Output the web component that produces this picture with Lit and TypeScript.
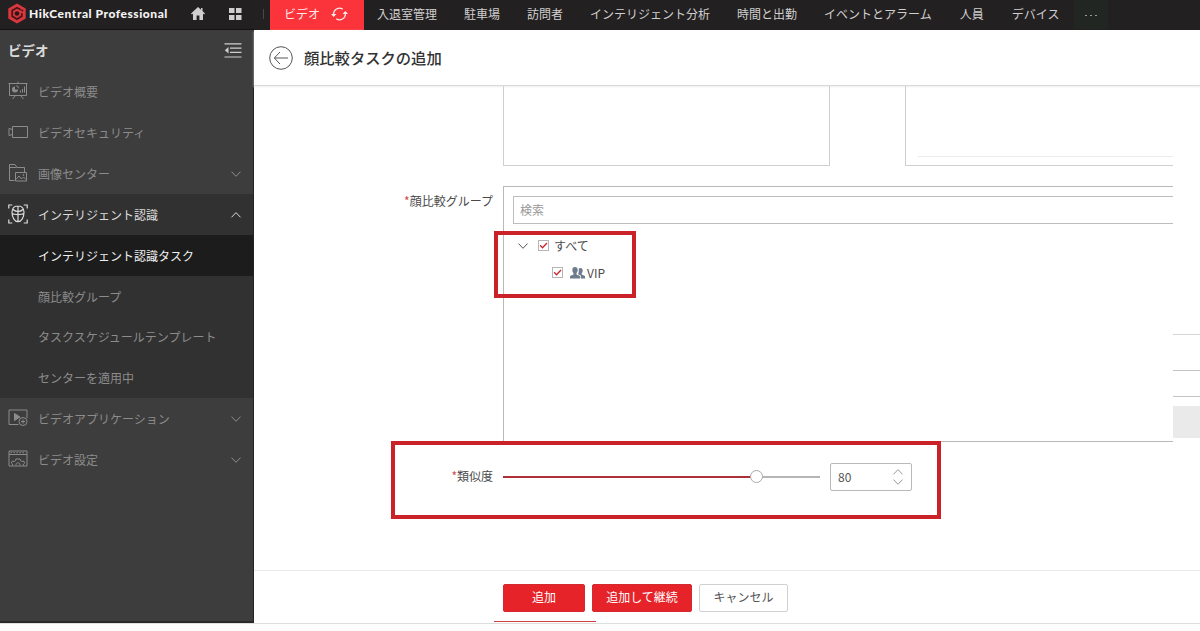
import { LitElement, html, css, svg } from "lit";
import { customElement, property } from "lit/decorators.js";
import { classMap } from "lit/directives/class-map.js";

const chevron = (up: boolean) => html`<svg width="12" height="8" viewBox="0 0 12 8" fill="none" stroke="currentColor" stroke-width="1"><path d=${up ? "M1.5 6.3 6 1.6l4.500 4.700" : "M1.5 1.6 6 6.3l4.500-4.700"} /></svg>`;

const icons: Record<string, unknown> = {
  board: svg`<path d="M.5 2.500h19M1.500 2.500v12h17v-12M10 .500v2M7.500 14.500l-3 3.500M12.500 14.500l3 3.500"/><path d="M7 5.500a3 3 0 1 0 3 3h-3z" fill="currentColor" stroke="none"/><path d="M8.200 4.800a2.800 2.800 0 0 1 2.500 2.500" /><path d="M12.500 11.500v-2M14.500 11.500v-3.500M16.500 11.500v-6"/>`,
  camera: svg`<path d="M4.500 4.500h15v11h-15zM4.500 7.500l-3.500-1v7l3.500-1"/>`,
  image: svg`<path d="M6.500 17.500h-5v-16h5.500l2 3h7.500v5M1.500 4.500h7"/><path d="M7.500 9.500h11v8.500h-11zM8 16.500l3-3.500 2.500 3 2-2 2.500 2.500"/><circle cx="15.500" cy="12" r=".5"/>`,
  face: svg`<g stroke-width="1.200"><path d="M.8 4.500V1h3.500M15.700 1h3.500v3.500M19.200 15.500V19h-3.500M4.300 19H.8v-3.500"/><path d="M10 1.800c-3.800 0-6 2.700-6 6.400 0 5 2.600 9.500 6 9.500s6-4.500 6-9.500c0-3.700-2.200-6.400-6-6.400zM10 1.800v15.900M4 9.500c3 1.400 9 1.400 12 0M5 5.500c1.500 1.500 3.500 2 5 2s3.500-.5 5-2"/></g>`,
  app: svg`<path d="M10.500 16.500h-9.500v-14.500h18v8"/><path d="M6.500 5.500v7l5.500-3.500z" fill="currentColor"/><circle cx="15" cy="13.500" r="4"/><path d="M15 11.500v4M13 13.500h4"/>`,
  gear: svg`<path d="M1 2h18v15H1zM1 5.500h18"/><path d="M2.500 3.700h15" stroke-dasharray="1.500 1.500"/><path d="M4.500 16.500v-1.500l-1.200-1 1.200-2 1.700.5 1.300-.8.4-1.700h4.200l.4 1.700 1.300.8 1.700-.5 1.200 2-1.200 1v1.500"/><path d="M8 16.500v-1c0-2.200 4-2.200 4 0v1"/>`,
};

interface Entry { label: string; icon: string; fold?: "up" | "down"; children?: string[] }

const entries: Entry[] = [
  { label: "ビデオ概要", icon: "board" },
  { label: "ビデオセキュリティ", icon: "camera" },
  { label: "画像センター", icon: "image", fold: "down" },
  { label: "インテリジェント認識", icon: "face", fold: "up", children: ["インテリジェント認識タスク", "顔比較グループ", "タスクスケジュールテンプレート", "センターを適用中"] },
  { label: "ビデオアプリケーション", icon: "app", fold: "down" },
  { label: "ビデオ設定", icon: "gear", fold: "down" },
];

@customElement("top-bar")
class TopBar extends LitElement {
  static styles = css`
    :host { display: flex; height: 30px; box-sizing: border-box; background: #232021; border-bottom: 1px solid #141112; color: #d0cfcf; font-size: 12px; line-height: 27px; white-space: nowrap; }
    svg { display: block; flex: none; }
    .brand { display: flex; align-items: center; width: 270px; box-sizing: border-box; padding-left: 7px; flex: none; height: 27px; }
    .name { width: 140px; margin-left: 2px; font: 900 12px/26px Lato, sans-serif; letter-spacing: .54px; color: #f4f4f4; }
    .home { margin-left: 22px; }
    .home, .grid { color: #d0cfcf; }
    .grid { margin-left: 24px; }
    .sep { width: 1px; height: 10px; background: #494647; margin-left: 21px; }
    .active { display: flex; align-items: center; width: 94px; height: 30px; box-sizing: border-box; padding: 0 0 3px 14px; background: #fb343c; color: #ffe9e9; gap: 11px; }
    nav { display: flex; gap: 27px; padding-left: 13px; }
    nav span:nth-child(n + 7) { margin-left: 1px; }
    .more { width: 34px; height: 29px; margin-left: 15px; background: #222622; display: flex; align-items: center; justify-content: center; gap: 3px; }
    .more i { width: 2px; height: 1px; background: #999; margin-top: 2px; }
  `;
  render() {
    const items = ["入退室管理", "駐車場", "訪問者", "インテリジェント分析", "時間と出勤", "イベントとアラーム", "人員", "デバイス"];
    return html`
      <div class="brand">
        <svg width="20" height="21" viewBox="0 0 20 21"><path d="M10 .4 18.700 5.400v10L10 20.500 1.300 15.400v-10z" fill="#d9383e"/><path d="M13.800 6.800 10 4.700 5.200 7.500v5.800l4.800 2.800 4.800-2.800v-3" fill="none" stroke="#4a1518" stroke-width="1.800"/><circle cx="10" cy="10.500" r="2.300" fill="#2a1718"/><circle cx="15.300" cy="7.500" r="1.100" fill="#4a1518"/></svg>
        <span class="name">HikCentral Professional</span>
        <svg class="home" width="14" height="13" viewBox="0 0 14 13" fill="currentColor"><path d="M7 0 0 6.500l1 .9 1-.9V13h3.600V8.500h2.800V13H12V6.500l1 .9 1-.9-2.500-2.400V1H10v1.700z"/></svg>
        <svg class="grid" width="13" height="12" viewBox="0 0 13 12" fill="currentColor"><path d="M0 0h5.500v5H0zM7 0h5.500v5H7zM0 7h5.500v5H0zM7 7h5.500v5H7z"/></svg>
        <span class="sep"></span>
      </div>
      <div class="active"><span>ビデオ</span>
        <svg width="17" height="14" viewBox="0 0 17 14" fill="none" stroke="currentColor" stroke-width="1.200"><path d="M11.800 2.200A5.900 5.900 0 0 0 2.600 7.500M5.200 11.800A5.900 5.900 0 0 0 14.400 6.500"/><path d="M0 7h5.400L2.700 10zM17 7h-5.400L14.300 4z" fill="currentColor" stroke="none"/></svg>
      </div>
      <nav>${items.map((t) => html`<span>${t}</span>`)}</nav>
      <div class="more"><i></i><i></i><i></i></div>`;
  }
}

@customElement("side-menu")
class SideMenu extends LitElement {
  static styles = css`
    :host { display: block; width: 254px; height: 593px; box-sizing: border-box; background: #3d3d3d; color: #8c8c8c; font-size: 12px; border-right: 1px solid #242424; border-bottom: 2px solid #292929; }
    svg { display: block; flex: none; }
    .head { display: flex; align-items: center; justify-content: space-between; height: 41px; padding: 0 11px 0 8px; color: #dcdcdc; font-size: 13.500px; font-weight: 700; }
    .head span { padding-bottom: 2px; }
    .row { display: flex; align-items: center; height: 41px; padding: 0 11px 0 8px; gap: 10px; }
    .label { flex: 1; }
    .icon { padding-bottom: 1px; }
    .group.open { background: #313131; }
    .open > .row { color: #dcdcdc; }
    .sub { display: flex; align-items: center; height: 40.800px; padding-left: 38px; }
    .sub.on { background: #1c1c1c; color: #f0f0f0; }
  `;
  render() {
    return html`
      <div class="head"><span>ビデオ</span>
        <svg width="18" height="15" viewBox="0 0 18 15" fill="none" stroke="#cfcfcf" stroke-width="1.200"><path d="M.5 .8h17M6 5.200h11.500M6 9.400h11.500M.5 14h17"/><path d="M4.500 4v6.500L.8 7.300z" fill="#cfcfcf" stroke="none"/></svg>
      </div>
      ${entries.map((e) => html`<div class=${classMap({ group: true, open: !!e.children })}>
        <div class="row">
          <svg class="icon" width="20" height="20" viewBox="0 0 20 20" fill="none" stroke="currentColor" stroke-width="1">${icons[e.icon]}</svg>
          <span class="label">${e.label}</span>${e.fold ? chevron(e.fold === "up") : ""}
        </div>
        ${(e.children ?? []).map((c, i) => html`<div class=${classMap({ sub: true, on: i === 0 })}>${c}</div>`)}
      </div>`)}`;
  }
}

@customElement("check-box")
class CheckBox extends LitElement {
  static styles = css`
    :host { display: block; width: 11px; height: 11px; box-sizing: border-box; border: 1px solid #b5b5b5; flex: none; }
    svg { display: block; }
  `;
  render() {
    return html`<svg width="9" height="9" viewBox="0 0 9 9" fill="none" stroke="#c9252d" stroke-width="1.300"><path d="M1.200 4.300 3.500 6.700 8 2"/></svg>`;
  }
}

@customElement("value-slider")
class ValueSlider extends LitElement {
  @property({ type: Number }) value = 80;
  static styles = css`
    :host { display: flex; align-items: center; width: 317px; height: 14px; }
    .fill { height: 2px; background: #ad3036; }
    .knob { width: 13px; height: 13px; box-sizing: border-box; border: 1px solid #aaa; border-radius: 50%; background: #fff; margin: 0 -6.500px; z-index: 1; flex: none; }
    .rest { flex: 1; height: 2px; background: #b5b5b5; }
  `;
  render() {
    return html`<div class="fill" style="width:${this.value}%"></div><div class="knob"></div><div class="rest"></div>`;
  }
}

@customElement("app-root")
class AppRoot extends LitElement {
  static styles = css`
    :host { display: block; position: relative; width: 1200px; height: 631px; overflow: hidden; background: #fdfdfd; font-family: "Noto Sans CJK JP", sans-serif; font-size: 12px; color: #4a4a4a; }
    * { box-sizing: border-box; }
    svg { display: block; flex: none; }
    .shell { display: grid; grid-template-columns: 254px 1fr; height: 594px; border-bottom: 1px solid #dedede; }
    .main { display: flex; flex-direction: column; background: #fff; }
    .title { display: flex; align-items: center; gap: 11px; height: 56px; padding-left: 15px; border-bottom: 1px solid #d9d9d9; box-shadow: 0 1px 2px #eee; font-size: 15.300px; font-weight: 500; color: #333; }
    .title span { padding-bottom: 2px; }
    .columns { display: grid; grid-template-columns: 919px 27px; height: 484px; }
    .form { overflow: hidden; }
    .panels { display: flex; padding-left: 249px; height: 80px; gap: 75px; }
    .panel { width: 327px; flex: none; border: 1px solid #cfcfcf; border-top: 0; }
    .panel.wide { padding: 70px 0 0 12px; }
    .line { height: 1px; background: #ebebeb; }
    .field { display: flex; gap: 10px; }
    .caption { width: 239px; text-align: right; flex: none; }
    .caption b { color: #d0474d; font-weight: 400; font-size: 12px; }
    .groups { margin-top: 20px; }
    .groups .caption { padding-top: 6px; }
    .tree { width: 700px; height: 256px; flex: none; border: 1px solid #b9b9b9; padding: 9px; }
    .search { height: 28px; border: 1px solid #bdbdbd; padding: 4px 6px; line-height: 18px; color: #999; margin-bottom: 8px; }
    .node { display: flex; align-items: center; height: 27px; padding-left: 4px; }
    .node .fold { display: flex; margin-right: 9px; color: #555; }
    .node.leaf { padding-left: 39px; }
    .node .text { margin-left: 5px; }
    .node .people { margin-left: 7px; }
    .node .people + .text { margin-left: 2px; }
    .likeness { align-items: center; height: 28px; margin-top: 21px; }
    .likeness .caption { padding-bottom: 3px; }
    .likeness value-slider { margin-bottom: 1px; }
    .number { display: flex; align-items: center; justify-content: space-between; width: 82px; height: 28px; border: 1px solid #b9b9b9; border-radius: 2px; padding: 0 7px; color: #555; }
    .number .amount { padding-bottom: 2px; }
    .steps { display: flex; flex-direction: column; gap: 2px; color: #999; }
    .edge { padding-top: 248px; }
    .edge .rule { height: 1px; background: #c4c4c4; }
    .edge .rule.a { background: #d6d6d6; margin-bottom: 35px; }
    .edge .rule.b { margin-bottom: 25px; }
    .edge .block { height: 32px; background: #eaeaea; margin-top: 9px; }
    .actions { display: flex; gap: 7px; height: 53px; padding: 13px 0 0 249px; border-top: 1px solid #e9e9e9; }
    .btn { width: 82px; height: 28px; border-radius: 2px; background: #e52329; border: 1px solid #d32a2f; color: #fff; text-align: center; line-height: 24px; }
    .btn.long { width: 100px; }
    .btn.plain { width: 89px; background: #fff; border-color: #d0d0d0; color: #555; }
    .frame { position: absolute; border: 4px solid #cb2229; }
    .frame.tree-mark { left: 494px; top: 231px; width: 142px; height: 67px; }
    .frame.slider-mark { left: 391px; top: 441px; width: 550px; height: 78px; }
    .underline { position: absolute; left: 494px; top: 621px; width: 102px; height: 1px; background: #cf4348; }
  `;
  render() {
    return html`
      <top-bar></top-bar>
      <div class="shell">
        <side-menu></side-menu>
        <div class="main">
          <div class="title">
            <svg width="24" height="24" viewBox="0 0 24 24" fill="none" stroke="#555" stroke-width="1"><circle cx="12" cy="12" r="11.300"/><path d="M19 12H5.500M11 6l-5.700 6 5.700 6"/></svg>
            <span>顔比較タスクの追加</span>
          </div>
          <div class="columns">
            <div class="form">
              <div class="panels"><div class="panel"></div><div class="panel wide"><div class="line"></div></div></div>
              <div class="field groups">
                <div class="caption"><b>*</b>顔比較グループ</div>
                <div class="tree">
                  <div class="search">検索</div>
                  <div class="node"><span class="fold">${chevron(false)}</span><check-box></check-box><span class="text">すべて</span></div>
                  <div class="node leaf"><check-box></check-box>
                    <svg class="people" width="15" height="12" viewBox="0 0 15 12" fill="#6d7b8c"><path d="M5 0c1.800 0 2.700 1.200 2.700 3 0 1.400-.5 2.500-1.200 3.200v1.300L10 9v2.500H0V9l3.500-1.500V6.200C2.800 5.500 2.300 4.400 2.300 3 2.300 1.200 3.200 0 5 0z"/><path d="M10.300 1c1.600 0 2.400 1 2.400 2.500 0 1.200-.4 2.200-1 2.800v1.200L15 9v2.500h-4.200V8.400L8 7.200c.6-1 1-2.500.7-5.200.3-.6.9-1 1.600-1z"/></svg>
                    <span class="text">VIP</span></div>
                </div>
              </div>
              <div class="field likeness">
                <div class="caption"><b>*</b>類似度</div>
                <value-slider .value=${80}></value-slider>
                <div class="number"><span class="amount">80</span><span class="steps">${chevron(true)}${chevron(false)}</span></div>
              </div>
            </div>
            <div class="edge"><div class="rule a"></div><div class="rule b"></div><div class="rule"></div><div class="block"></div></div>
          </div>
          <div class="actions"><div class="btn">追加</div><div class="btn long">追加して継続</div><div class="btn plain">キャンセル</div></div>
        </div>
      </div>
      <div class="frame tree-mark"></div>
      <div class="frame slider-mark"></div>
      <div class="underline"></div>`;
  }
}
